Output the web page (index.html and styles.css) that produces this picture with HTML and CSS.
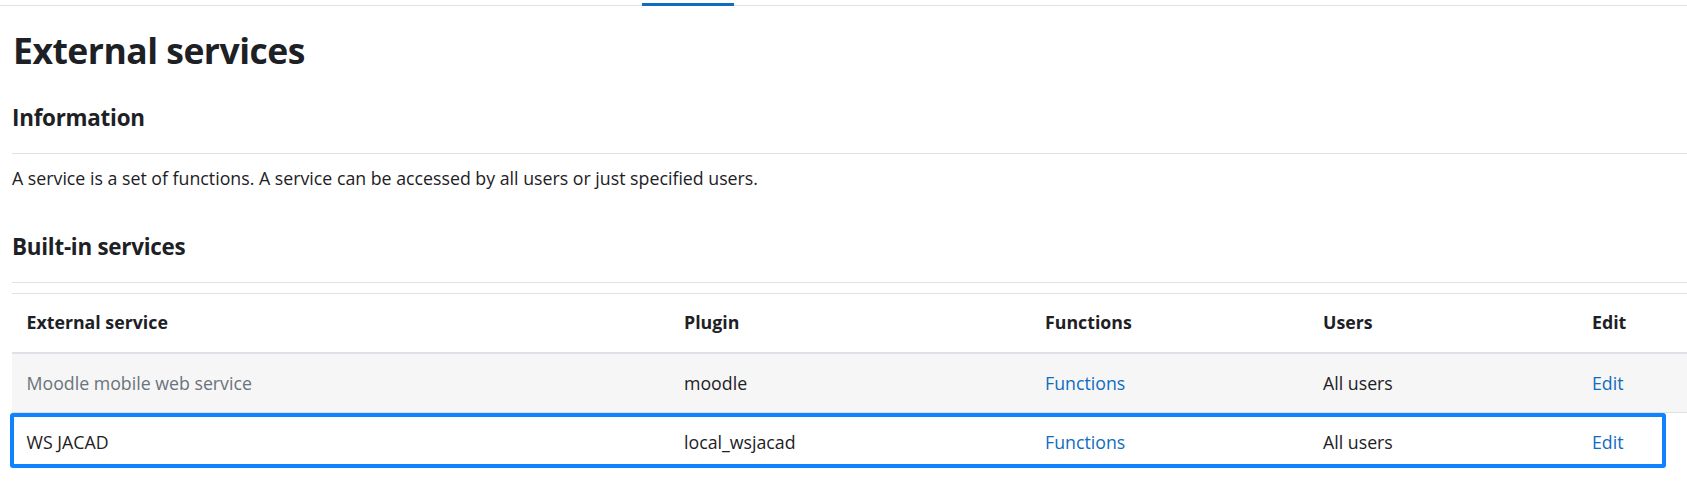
FILE: index.html
```html
<!DOCTYPE html>
<html lang="en">
<head>
<meta charset="utf-8">
<title>External services</title>
<link rel="stylesheet" href="styles.css">
</head>
<body>
<nav class="secnav">
  <span class="tab-active"></span>
</nav>
<main class="page">
  <h2 class="title">External services</h2>
  <h3 class="section">Information</h3>
  <p class="intro">A service is a set of functions. A service can be accessed by all users or just specified users.</p>
  <h3 class="section">Built-in services</h3>
  <div class="table-wrap">
    <table class="services">
      <colgroup>
        <col class="c-name">
        <col class="c-plugin">
        <col class="c-func">
        <col class="c-users">
        <col class="c-edit">
      </colgroup>
      <thead>
        <tr>
          <th>External service</th>
          <th>Plugin</th>
          <th>Functions</th>
          <th>Users</th>
          <th>Edit</th>
        </tr>
      </thead>
      <tbody>
        <tr class="dimmed">
          <td class="muted">Moodle mobile web service</td>
          <td>moodle</td>
          <td><a href="#">Functions</a></td>
          <td>All users</td>
          <td><a href="#">Edit</a></td>
        </tr>
        <tr>
          <td>WS JACAD</td>
          <td>local_wsjacad</td>
          <td><a href="#">Functions</a></td>
          <td>All users</td>
          <td><a href="#">Edit</a></td>
        </tr>
      </tbody>
    </table>
    <div class="highlight"></div>
  </div>
</main>
</body>
</html>
```

FILE: styles.css
```css
html, body {
  margin: 0;
  padding: 0;
  background: #ffffff;
}

body {
  font-family: "Open Sans", "Noto Sans", "Liberation Sans", sans-serif;
  font-size: 17.75px;
  line-height: 1.5;
  color: #1d2125;
  overflow: hidden;
}

.secnav {
  height: 5px;
  border-bottom: 1px solid #dee2e6;
  display: flex;
  align-items: flex-end;
  padding-left: 642px;
}

.tab-active {
  display: block;
  width: 92px;
  height: 3px;
  background: #0f6cbf;
  margin-bottom: -1px;
}

.page {
  padding-left: 12px;
}

.title {
  margin: 22.5px 0 0 1px;
  font-size: 35.5px;
  line-height: 1.2;
  font-weight: 700;
  letter-spacing: -0.5px;
}

.section {
  margin: 0;
  font-size: 22.4px;
  line-height: 1.2;
  font-weight: 700;
  letter-spacing: -0.25px;
  padding-bottom: 21.25px;
  border-bottom: 1px solid #dee2e6;
}

.title + .section {
  margin-top: 33.7px;
}

.intro {
  margin: 10.8px 0 42.4px 0;
}

.table-wrap {
  position: relative;
  margin-top: 10px;
}

.services {
  width: 100%;
  table-layout: fixed;
  border-collapse: collapse;
}

.c-name { width: 657.5px; }
.c-plugin { width: 361px; }
.c-func { width: 278px; }
.c-users { width: 269px; }

.services th,
.services td {
  text-align: left;
  padding: 14.5px 14.5px;
  line-height: 29.25px;
  border-top: 1px solid #dee2e6;
  white-space: nowrap;
  vertical-align: top;
}

.services th {
  font-weight: 700;
  border-bottom: 2px solid #dee2e6;
}

.services tr.dimmed td {
  background: #f6f6f6;
}

.services td.muted {
  color: #6a737b;
}

.services a {
  color: #0f6cbf;
  text-decoration: none;
}

.highlight {
  position: absolute;
  left: -2px;
  top: 120px;
  width: 1656px;
  height: 55px;
  box-sizing: border-box;
  border: 4px solid #0f82ff;
  border-radius: 3px;
  pointer-events: none;
}
```
